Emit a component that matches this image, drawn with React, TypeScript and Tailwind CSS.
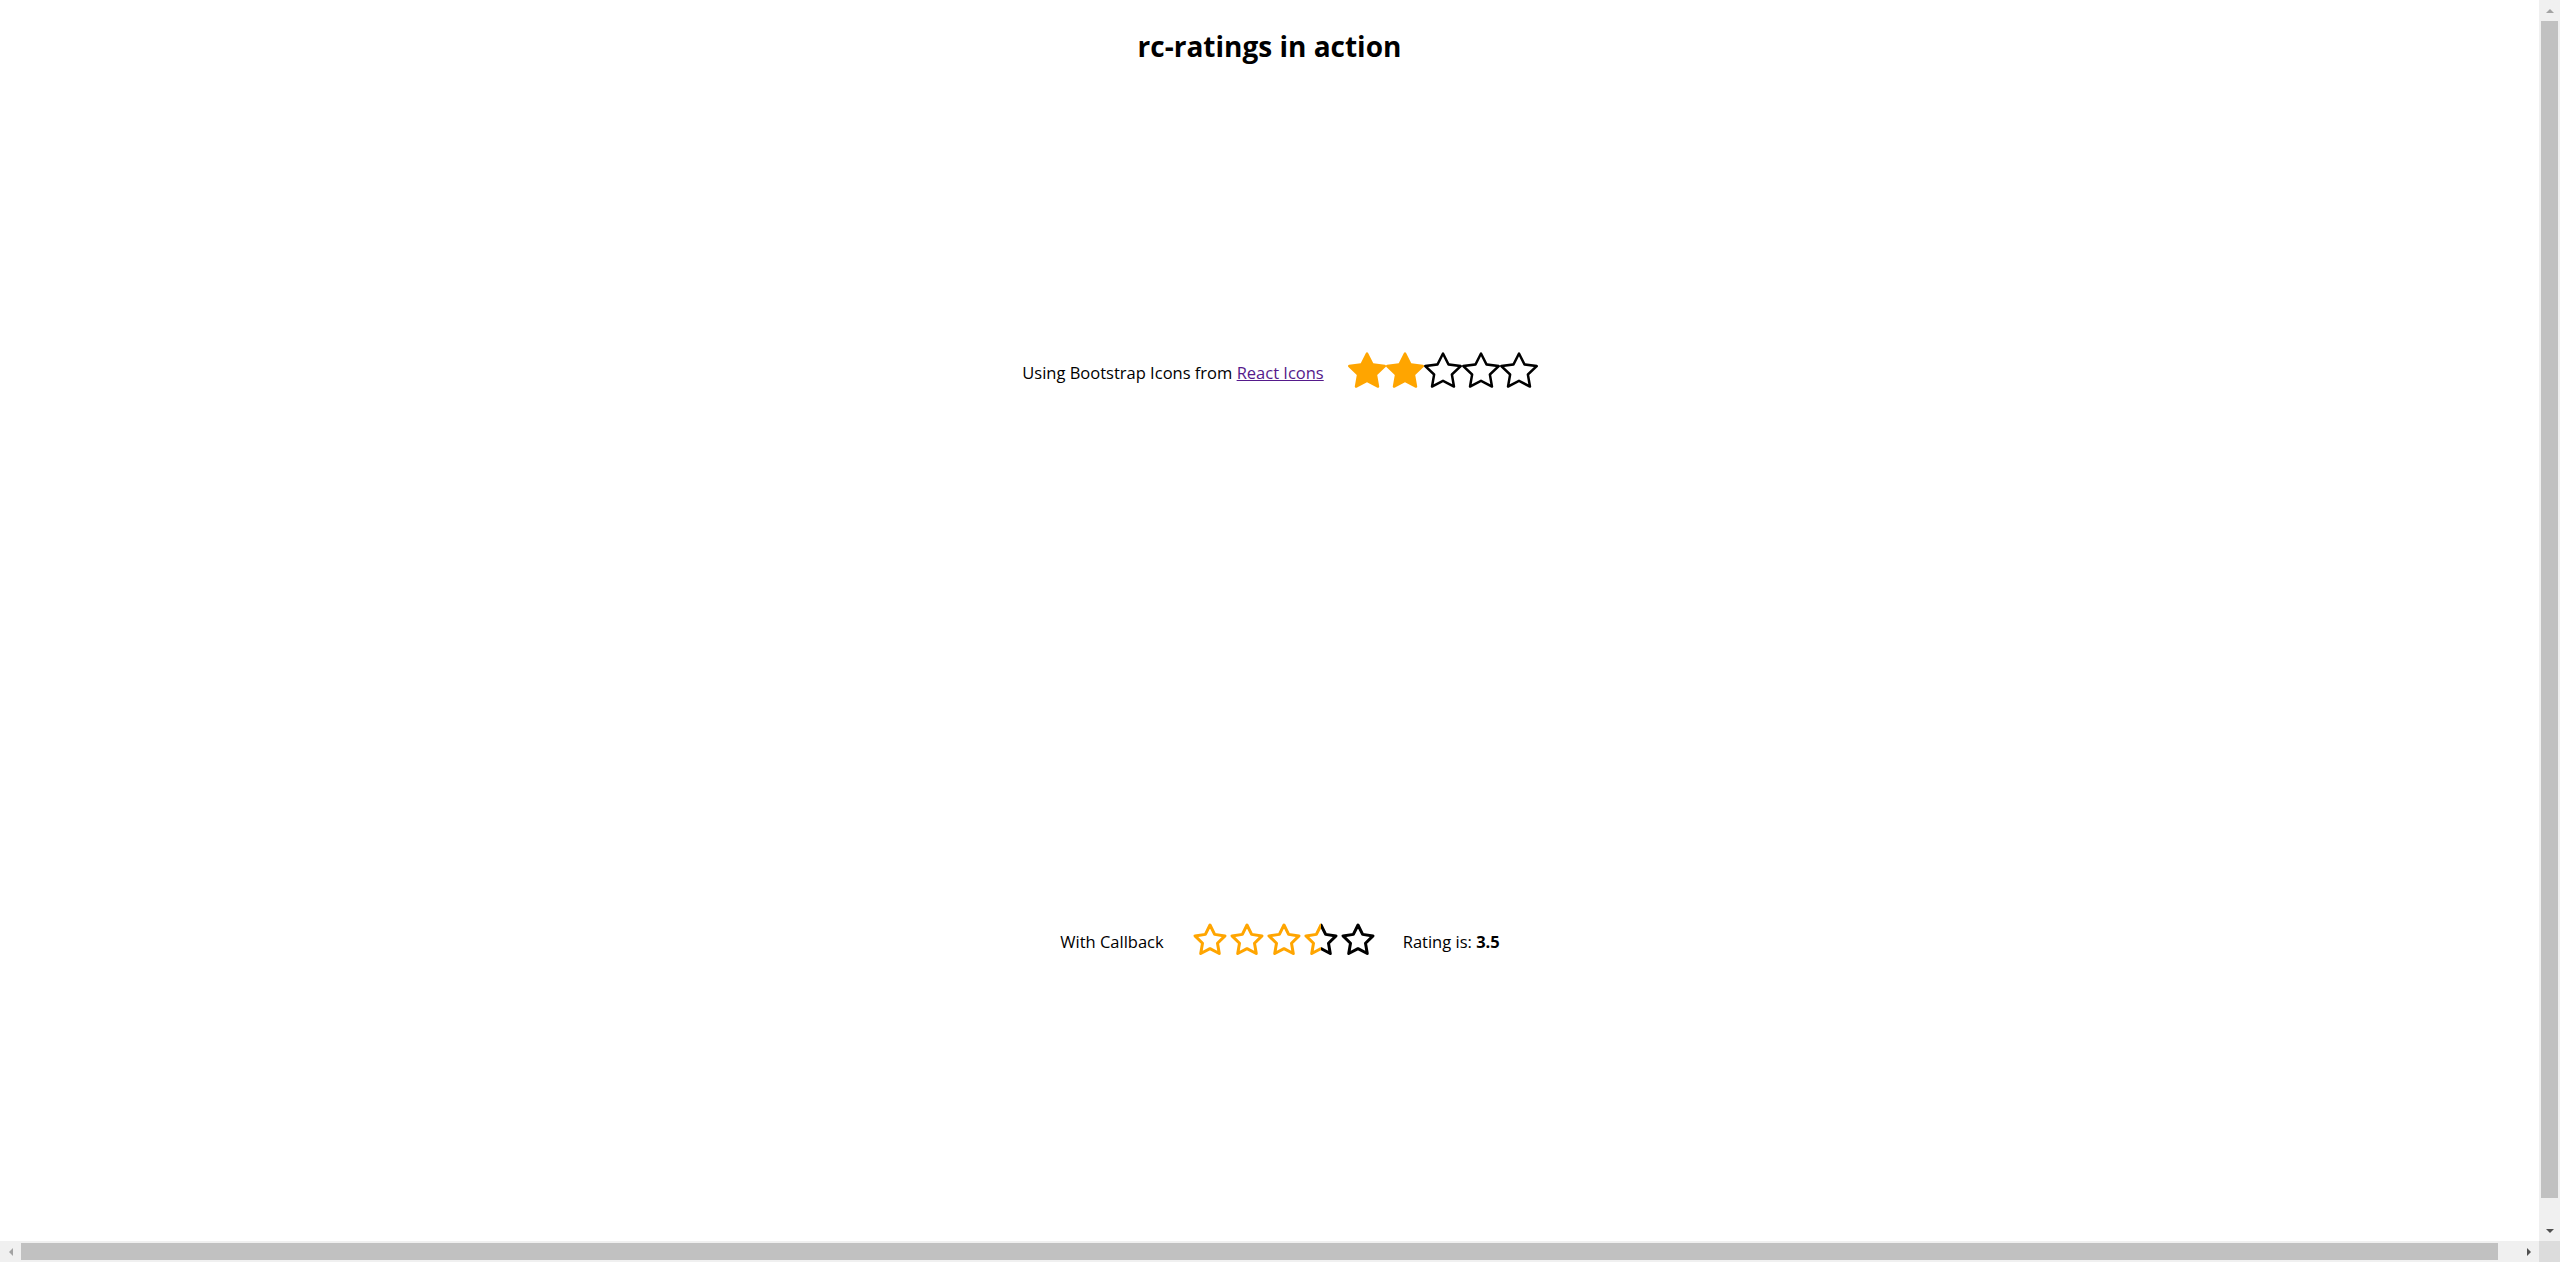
import React from "react";
import { BsStar, BsStarFill } from "react-icons/bs";

const FONT = { fontFamily: '"Open Sans", "Noto Sans", sans-serif' };

const STAR_POINTS =
  "12 2 15.09 8.26 22 9.27 17 14.14 18.18 21.02 12 17.77 5.82 21.02 7 14.14 2 9.27 8.91 8.26 12 2";

function OutlineStar({ fill }: { fill: "full" | "half" | "none" }) {
  const id = React.useId().replace(/:/g, "");
  const orange = "#FFA500";
  if (fill === "half") {
    return (
      <svg width="36" height="36" viewBox="0 0 24 24" fill="none" strokeWidth="2" strokeLinejoin="round" strokeLinecap="round">
        <defs>
          <clipPath id={`l${id}`}>
            <rect x="0" y="0" width="12" height="24" />
          </clipPath>
          <clipPath id={`r${id}`}>
            <rect x="12" y="0" width="12" height="24" />
          </clipPath>
        </defs>
        <polygon points={STAR_POINTS} stroke={orange} clipPath={`url(#l${id})`} />
        <polygon points={STAR_POINTS} stroke="#000" clipPath={`url(#r${id})`} />
      </svg>
    );
  }
  return (
    <svg width="36" height="36" viewBox="0 0 24 24" fill="none" stroke={fill === "full" ? orange : "#000"} strokeWidth="2" strokeLinejoin="round" strokeLinecap="round">
      <polygon points={STAR_POINTS} />
    </svg>
  );
}

function Tri({ dir, color }: { dir: "up" | "down" | "left" | "right"; color: string }) {
  const pts =
    dir === "up" ? "0,4 4,0 8,4" : dir === "down" ? "0,0 8,0 4,4" : dir === "left" ? "4,0 4,8 0,4" : "0,0 0,8 4,4";
  const w = dir === "up" || dir === "down" ? 8 : 4;
  const h = dir === "up" || dir === "down" ? 4 : 8;
  return (
    <svg width={w} height={h} viewBox={`0 0 ${w} ${h}`}>
      <polygon points={pts} fill={color} />
    </svg>
  );
}

export default function App() {
  return (
    <div className="w-screen h-screen flex flex-col overflow-hidden bg-white text-black" style={FONT}>
      <div className="flex flex-1 min-h-0">
        <main className="flex-1 flex flex-col">
          <h1 className="text-center font-bold text-[28px] leading-[40px] pt-[26px] h-[85px]">rc-ratings in action</h1>
          <section className="h-[570px] flex items-center justify-center pl-[21px]">
            <span className="text-[16.5px] pt-[7px]">
              Using Bootstrap Icons from{" "}
              <a href="#" className="underline text-[#551a8b]">React Icons</a>
            </span>
            <div className="flex ml-[24px]">
              <BsStarFill size={38} color="#FFA500" />
              <BsStarFill size={38} color="#FFA500" />
              <BsStar size={38} color="#000" />
              <BsStar size={38} color="#000" />
              <BsStar size={38} color="#000" />
            </div>
          </section>
          <section className="h-[570px] flex items-center justify-center pl-[21px]">
            <span className="text-[16.5px] pt-[5px]">With Callback</span>
            <div className="flex gap-[1px] ml-[28px]">
              <OutlineStar fill="full" />
              <OutlineStar fill="full" />
              <OutlineStar fill="full" />
              <OutlineStar fill="half" />
              <OutlineStar fill="none" />
            </div>
            <span className="text-[16.5px] pt-[5px] ml-[27px]">
              Rating is: <b>3.5</b>
            </span>
          </section>
        </main>
        <div className="w-[21px] flex flex-col bg-[#f0f0f0]">
          <div className="h-[21px] flex items-center justify-center">
            <Tri dir="up" color="#a3a3a3" />
          </div>
          <div className="flex-1 px-[2px] pb-[22px]">
            <div className="h-full bg-[#c1c1c1]" />
          </div>
          <div className="h-[21px] flex items-center justify-center">
            <Tri dir="down" color="#505050" />
          </div>
        </div>
      </div>
      <div className="h-[21px] flex bg-[#f0f0f0]">
        <div className="w-[21px] flex items-center justify-center">
          <Tri dir="left" color="#a3a3a3" />
        </div>
        <div className="flex-1 py-[2px] pr-[20px]">
          <div className="h-full bg-[#c1c1c1]" />
        </div>
        <div className="w-[21px] flex items-center justify-center">
          <Tri dir="right" color="#505050" />
        </div>
        <div className="w-[21px] bg-[#dcdcdc]" />
      </div>
    </div>
  );
}
